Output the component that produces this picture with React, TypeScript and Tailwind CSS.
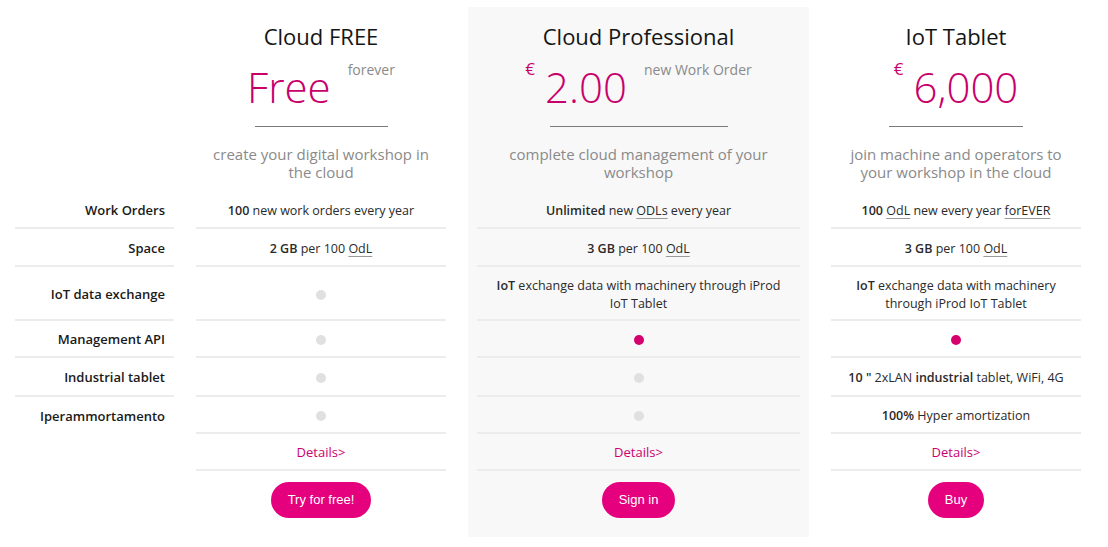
import React from 'react';

type Plan = {
  title: string;
  currency?: string;
  amount: string;
  suffix?: string;
  lineW: string;
  desc: string;
  cells: React.ReactNode[];
  cta: string;
  panel?: boolean;
};

const Dot = ({ on }: { on?: boolean }) => (
  <span
    className={
      on
        ? 'block w-[10px] h-[10px] rounded-full bg-[#d6006f]'
        : 'block w-[10px] h-[10px] rounded-full bg-[#e0e0e0]'
    }
  />
);

const Abbr = ({ children }: { children: React.ReactNode }) => (
  <span className="underline decoration-[#9a9a9a] underline-offset-[3px]">{children}</span>
);

const B = ({ children }: { children: React.ReactNode }) => <span className="font-semibold">{children}</span>;

// heights include the 2px bottom divider
const rowH = ['h-[38px]', 'h-[38px]', 'h-[54px]', 'h-[37px]', 'h-[39px]', 'h-[37px]', 'h-[37px]'];

const labels = ['Work Orders', 'Space', 'IoT data exchange', 'Management API', 'Industrial tablet', 'Iperammortamento'];

const plans: Plan[] = [
  {
    title: 'Cloud FREE',
    amount: 'Free',
    suffix: 'forever',
    lineW: 'w-[133px]',
    desc: 'create your digital workshop in the cloud',
    cells: [
      <><B>100</B> new work orders every year</>,
      <><B>2 GB</B> per 100 <Abbr>OdL</Abbr></>,
      <Dot />,
      <Dot />,
      <Dot />,
      <Dot />,
    ],
    cta: 'Try for free!',
  },
  {
    title: 'Cloud Professional',
    currency: '€',
    amount: '2.00',
    suffix: 'new Work Order',
    lineW: 'w-[178px]',
    desc: 'complete cloud management of your workshop',
    cells: [
      <><B>Unlimited</B> new <Abbr>ODLs</Abbr> every year</>,
      <><B>3 GB</B> per 100 <Abbr>OdL</Abbr></>,
      <><B>IoT</B> exchange data with machinery through iProd IoT Tablet</>,
      <Dot on />,
      <Dot />,
      <Dot />,
    ],
    cta: 'Sign in',
    panel: true,
  },
  {
    title: 'IoT Tablet',
    currency: '€',
    amount: '6,000',
    lineW: 'w-[134px]',
    desc: 'join machine and operators to your workshop in the cloud',
    cells: [
      <><B>100</B> <Abbr>OdL</Abbr> new every year <Abbr>forEVER</Abbr></>,
      <><B>3 GB</B> per 100 <Abbr>OdL</Abbr></>,
      <><B>IoT</B> exchange data with machinery through iProd IoT Tablet</>,
      <Dot on />,
      <><B>10 "</B> 2xLAN <B>industrial</B> tablet, WiFi, 4G</>,
      <><B>100%</B> Hyper amortization</>,
    ],
    cta: 'Buy',
  },
];

const PlanColumn = ({ plan }: { plan: Plan }) => (
  <div
    className={
      plan.panel
        ? 'ml-[22px] w-[341px] shrink-0 bg-[#f8f8f8] px-[9px] pb-[19px] flex flex-col'
        : 'ml-[22px] w-[250px] shrink-0 flex flex-col'
    }
  >
    <div className="h-[184px] flex flex-col items-center">
      <h2 className="mt-[14px] text-[22px] leading-[30px] text-[#151515]">{plan.title}</h2>
      <div className="mt-[15px] h-[42px] flex items-start justify-center">
        {plan.currency && (
          <span className="mt-[-7px] mr-[10px] text-[17px] leading-[20px] text-[#c8006c]">{plan.currency}</span>
        )}
        <span className="text-[42px] leading-[42px] font-[350] text-[#c8006c]">{plan.amount}</span>
        {plan.suffix && (
          <span className="mt-[-5px] ml-[17px] text-[14px] leading-[18px] text-[#8a8a8a]">{plan.suffix}</span>
        )}
      </div>
      <div className={`mt-[18px] h-px bg-[#7a7a7a] ${plan.lineW}`} />
      <p className="mt-[18px] px-[10px] text-center text-[15px] leading-[18px] text-[#8a8a8a]">{plan.desc}</p>
    </div>

    {plan.cells.map((c, i) => (
      <div
        key={i}
        className={`${rowH[i]} flex items-center justify-center text-center px-[10px] pt-[3px] border-b-2 border-[#ececec] text-[12.5px] leading-[18px] text-[#2a2a2a]`}
      >
        <div>{c}</div>
      </div>
    ))}
    <div className={`${rowH[6]} flex items-center justify-center pt-[2px] border-b-2 border-[#ececec] text-[13px] text-[#cc0070]`}>
      Details&gt;
    </div>

    <button className="mt-[11px] self-center h-[36px] px-[17px] rounded-full bg-[#e5007d] text-white text-[13px] font-['Liberation_Sans',Arial,sans-serif]">
      {plan.cta}
    </button>
  </div>
);

export default function App() {
  return (
    <div className="w-[1108px] h-[547px] bg-white flex items-start pl-[15px] pt-[7px] font-['Open_Sans',sans-serif] overflow-hidden">
      <div className="w-[159px] shrink-0 flex flex-col">
        <div className="h-[184px]" />
        {labels.map((l, i) => (
          <div
            key={l}
            className={`${rowH[i]} flex items-center justify-end pr-[9px] pt-[3px] text-[13px] font-semibold text-[#1a1a1a] ${
              i < 5 ? 'border-b-2 border-[#ececec]' : ''
            }`}
          >
            {l}
          </div>
        ))}
      </div>
      {plans.map((p) => (
        <PlanColumn key={p.title} plan={p} />
      ))}
    </div>
  );
}
